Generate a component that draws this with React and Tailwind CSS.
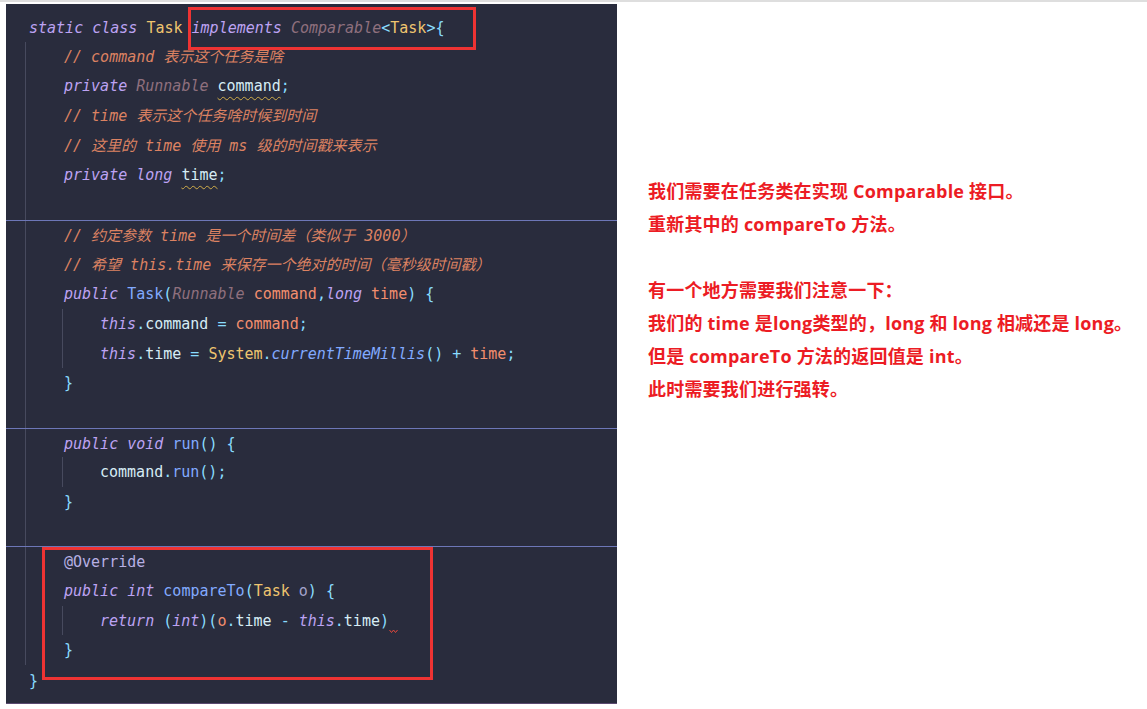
import React from "react";

const K = ({ children }) => <span className="text-[#bda3f3] italic">{children}</span>;
const C = ({ children }) => <span className="text-[#efc56f]">{children}</span>;
const M = ({ children }) => <span className="text-[#dc8262] italic">{children}</span>;
const TY = ({ children }) => <span className="text-[#8f707e] italic">{children}</span>;
const F = ({ children }) => <span className="text-[#d6ecf5]">{children}</span>;
const P = ({ children }) => <span className="text-[#89ddff]">{children}</span>;
const R = ({ children }) => <span className="text-[#f28e6e]">{children}</span>;
const FN = ({ children }) => <span className="text-[#82aaff]">{children}</span>;
const FNI = ({ children }) => <span className="text-[#82aaff] italic">{children}</span>;
const W = ({ children }) => (
  <span className="text-[#d6ecf5] underline decoration-wavy decoration-[#d2ae4a] decoration-1 underline-offset-[5px]">
    {children}
  </span>
);

const G = "border-l border-[#474a5e]";

function Line({ depth = 0, sep = false, children }) {
  const top = sep ? "border-t border-[#6d77b8]" : "";
  if (depth === 0) {
    return (
      <div className={`h-[29.7px] pl-[23px] pt-[2px] leading-[29.7px] whitespace-pre ${top}`}>{children}</div>
    );
  }
  if (depth === 1) {
    return (
      <div className={`h-[29.7px] pl-[19px] whitespace-pre ${top}`}>
        <div className={`h-full pl-[38px] pt-[2px] leading-[27.7px] ${G}`}>{children}</div>
      </div>
    );
  }
  return (
    <div className={`h-[29.7px] pl-[19px] whitespace-pre ${top}`}>
      <div className={`h-full pl-[36px] ${G}`}>
        <div className={`h-full pl-[37px] pt-[2px] leading-[27.7px] ${G}`}>{children}</div>
      </div>
    </div>
  );
}

function Blank({ sep = false }) {
  return <Line depth={1} sep={sep}>{" "}</Line>;
}

export default function App() {
  return (
    <div className="w-[1147px] h-[709px] bg-white overflow-hidden">
      <div className="h-[2px] bg-[#dedede]" />
      <div className="flex mt-[2px]">
        <div
          className="relative ml-[6px] w-[611px] h-[700px] bg-[#292c3d] border-b border-[#5a4a70] pt-[8px] text-[15px]"
          style={{ fontFamily: '"DejaVu Sans Mono", "Noto Sans CJK SC", monospace' }}
        >
          <Line>
            <K>static</K> <K>class</K> <C>Task</C> <K>implements</K> <TY>Comparable</TY>
            <P>&lt;</P>
            <C>Task</C>
            <P>&gt;{"{"}</P>
          </Line>
          <Line depth={1}>
            <M>// command 表示这个任务是啥</M>
          </Line>
          <Line depth={1}>
            <K>private</K> <TY>Runnable</TY> <W>command</W>
            <P>;</P>
          </Line>
          <Line depth={1}>
            <M>// time 表示这个任务啥时候到时间</M>
          </Line>
          <Line depth={1}>
            <M>// 这里的 time 使用 ms 级的时间戳来表示</M>
          </Line>
          <Line depth={1}>
            <K>private</K> <K>long</K> <W>time</W>
            <P>;</P>
          </Line>
          <Blank />
          <Line depth={1} sep>
            <M>// 约定参数 time 是一个时间差（类似于 3000）</M>
          </Line>
          <Line depth={1}>
            <M>// 希望 this.time 来保存一个绝对的时间（毫秒级时间戳）</M>
          </Line>
          <Line depth={1}>
            <K>public</K> <FN>Task</FN>
            <P>(</P>
            <TY>Runnable</TY> <R>command</R>
            <P>,</P>
            <K>long</K> <R>time</R>
            <P>)</P> <P>{"{"}</P>
          </Line>
          <Line depth={2}>
            <K>this</K>
            <P>.</P>
            <F>command</F> <P>=</P> <R>command</R>
            <P>;</P>
          </Line>
          <Line depth={2}>
            <K>this</K>
            <P>.</P>
            <F>time</F> <P>=</P> <C>System</C>
            <P>.</P>
            <FNI>currentTimeMillis</FNI>
            <P>()</P> <P>+</P> <R>time</R>
            <P>;</P>
          </Line>
          <Line depth={1}>
            <P>{"}"}</P>
          </Line>
          <Blank />
          <Line depth={1} sep>
            <K>public</K> <K>void</K> <FN>run</FN>
            <P>()</P> <P>{"{"}</P>
          </Line>
          <Line depth={2}>
            <F>command</F>
            <P>.</P>
            <FN>run</FN>
            <P>();</P>
          </Line>
          <Line depth={1}>
            <P>{"}"}</P>
          </Line>
          <Blank />
          <Line depth={1} sep>
            <span className="text-[#b7b0e4]">@Override</span>
          </Line>
          <Line depth={1}>
            <K>public</K> <K>int</K> <FN>compareTo</FN>
            <P>(</P>
            <C>Task</C> <span className="text-[#a4a3cc]">o</span>
            <P>)</P> <P>{"{"}</P>
          </Line>
          <Line depth={2}>
            <K>return</K> <P>(</P>
            <K>int</K>
            <P>)(</P>
            <R>o</R>
            <P>.</P>
            <F>time</F> <P>-</P> <K>this</K>
            <P>.</P>
            <F>time</F>
            <P>)</P>
            <svg width="9" height="5" viewBox="0 0 9 5" className="inline-block align-[-8px]">
              <path d="M0.5 1 L2.5 3.5 L4.5 1 L6.5 3.5 L8.5 1" fill="none" stroke="#e0483c" strokeWidth="1" />
            </svg>
          </Line>
          <Line depth={1}>
            <P>{"}"}</P>
          </Line>
          <Line>
            <P>{"}"}</P>
          </Line>

          <div className="absolute left-[182px] top-[3px] w-[288px] h-[43px] border-[3px] border-[#ee3333]" />
          <div className="absolute left-[36px] top-[543px] w-[391px] h-[133px] border-[3px] border-[#ee3333]" />
        </div>

        <div
          className="ml-[31px] mt-[171px] text-[18px] leading-[33px] font-bold text-[#ec1c24] whitespace-nowrap tracking-[0.2px]"
          style={{ fontFamily: '"Open Sans", "Noto Sans CJK SC", sans-serif' }}
        >
          <div>我们需要在任务类在实现 Comparable 接口。</div>
          <div>重新其中的 compareTo 方法。</div>
          <div className="h-[33px]" />
          <div>有一个地方需要我们注意一下：</div>
          <div>我们的 time 是long类型的，long 和 long 相减还是 long。</div>
          <div>但是 compareTo 方法的返回值是 int。</div>
          <div>此时需要我们进行强转。</div>
        </div>
      </div>
    </div>
  );
}
